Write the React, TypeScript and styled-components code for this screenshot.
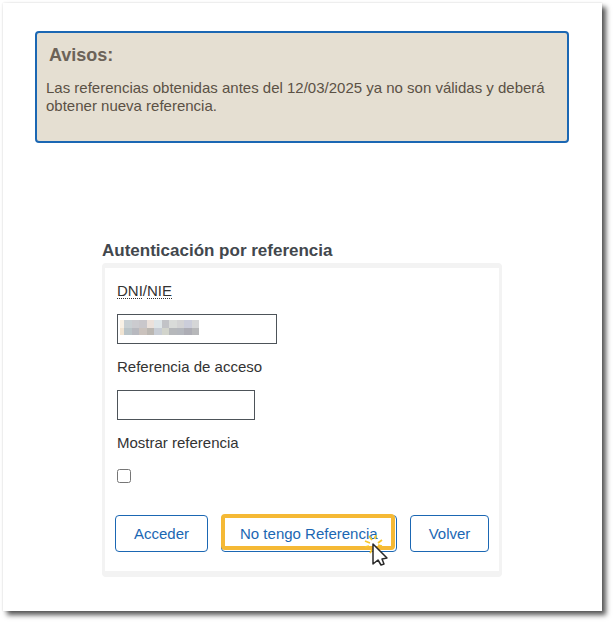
import React from "react";
import styled, { createGlobalStyle } from "styled-components";

const BLUE = "#1b67b3";

const GlobalStyle = createGlobalStyle`
  * { box-sizing: border-box; }
  body {
    margin: 0;
    background: #fff;
    color: #333;
    font-family: "Liberation Sans", Arial, sans-serif;
    font-size: 15px;
    line-height: 18px;
  }
`;

const Page = styled.main`
  min-height: calc(100vh - 14px);
  margin: 3px 11px 11px 3px;
  padding: 28px 33px 34px 32px;
  background: #fff;
  box-shadow: 0 0 2px rgba(0, 0, 0, 0.12), 4px 4px 5px rgba(0, 0, 0, 0.66);
`;

const Notice = styled.section`
  min-height: 112px;
  padding: 12px 9px;
  border: 2px solid ${BLUE};
  border-radius: 4px;
  background: #e5dfd2;
  color: #5b5145;
`;

const NoticeTitle = styled.h2`
  margin: 0 3px 14px;
  font-size: 18px;
  line-height: 20px;
  color: #6c6358;
`;

const NoticeText = styled.p`
  margin: 0;
`;

const Access = styled.section`
  margin: 97px 67px 0;
`;

const AccessTitle = styled.h1`
  margin: 0;
  font-size: 17px;
  line-height: 22px;
  color: #42474d;
`;

const Form = styled.form`
  margin-top: 1px;
  padding: 14px 10px 19px;
  border: solid #f3f3f3;
  border-width: 5px 3px 6px;
  border-radius: 4px;
`;

const Field = styled.div`
  display: flex;
  flex-direction: column;
  align-items: flex-start;
  gap: 14px;
  margin: 0 2px 14px;
`;

const Abbr = styled.abbr`
  text-decoration: underline dotted 1px;
  text-decoration-skip-ink: none;
  text-underline-offset: 2px;
`;

const InputFrame = styled.div`
  position: relative;
  display: flex;
`;

const TextInput = styled.input<{ $width: number }>`
  width: ${(p) => p.$width}px;
  height: 30px;
  padding: 4px;
  border: 1px solid #4d5359;
  border-radius: 0;
  background: #fff;
  font: inherit;
`;

const Mosaic = styled.svg`
  position: absolute;
  top: 6px;
  left: 3px;
  width: 79px;
  height: 15px;
  pointer-events: none;
`;

const Checkbox = styled.input`
  width: 14px;
  height: 14px;
  margin: 3px 0 0;
`;

const Actions = styled.div`
  display: flex;
  gap: 13px;
  margin-top: 32px;
`;

const Button = styled.button`
  position: relative;
  height: 37px;
  padding: 0 18px;
  border: 1px solid ${BLUE};
  border-radius: 4px;
  background: #fff;
  color: ${BLUE};
  font: inherit;
  white-space: nowrap;
  cursor: pointer;
`;

const Highlight = styled.span`
  position: absolute;
  inset: -2px 1px 1px -1px;
  border: 4px solid #f5b935;
  border-radius: 4px;
`;

const Pointer = styled.svg`
  position: absolute;
  right: 8px;
  bottom: -16px;
  width: 24px;
  height: 32px;
  pointer-events: none;
`;

const mosaicRows = [
  ["#f9f1e5", "#c9d0d3", "#cbcbcf", "#c9c7cb", "#ebe1db", "#dee5e8", "#c2c3c7", "#d9dbd9", "#d3d3d4", "#cbcdda", "#d5d6d7"],
  ["#f1e4d2", "#bac4c8", "#b8b9bf", "#cac2bd", "#bbb7b2", "#c8cdd5", "#d2d4cc", "#b6b8bb", "#b4b7bd", "#adadb5", "#b7b8ba"],
];

const HiddenValue = () => (
  <Mosaic viewBox="0 0 158 30" preserveAspectRatio="none" shapeRendering="crispEdges" aria-hidden="true">
    {mosaicRows.map((row, y) =>
      row.map((fill, x) => (
        <rect key={`${x}-${y}`} x={x ? 8 + (x - 1) * 15 : 0} y={y * 15} width={x ? 15 : 8} height="15" fill={fill} />
      ))
    )}
  </Mosaic>
);

const ClickPointer = () => (
  <Pointer viewBox="0 0 24 32" aria-hidden="true">
    <path d="M1 6l5 2M5 1l3 4M12 0l-1 4M18 5l-4 3M1 12l4-1M6 18l2-3M14 10l4 1" fill="none" stroke="#f7c72c" strokeWidth="1.8" />
    <path d="M9 9v20l5-4 3 5 3-1-2-5 5-1z" fill="#fff" stroke="#292929" strokeWidth="1.5" strokeLinejoin="round" />
  </Pointer>
);

export default function App() {
  return (
    <>
      <GlobalStyle />
      <Page>
        <Notice>
          <NoticeTitle>Avisos:</NoticeTitle>
          <NoticeText>
            Las referencias obtenidas antes del 12/03/2025 ya no son válidas y deberá obtener nueva referencia.
          </NoticeText>
        </Notice>
        <Access>
          <AccessTitle>Autenticación por referencia</AccessTitle>
          <Form onSubmit={(e) => e.preventDefault()}>
            <Field>
              <label htmlFor="dni">
                <Abbr>DNI</Abbr>/<Abbr>NIE</Abbr>
              </label>
              <InputFrame>
                <TextInput id="dni" type="text" $width={160} />
                <HiddenValue />
              </InputFrame>
            </Field>
            <Field>
              <label htmlFor="reference">Referencia de acceso</label>
              <TextInput id="reference" type="password" $width={138} />
            </Field>
            <Field>
              <label htmlFor="show">Mostrar referencia</label>
              <Checkbox id="show" type="checkbox" />
            </Field>
            <Actions>
              <Button type="submit">Acceder</Button>
              <Button type="button">
                No tengo Referencia
                <Highlight />
                <ClickPointer />
              </Button>
              <Button type="button">Volver</Button>
            </Actions>
          </Form>
        </Access>
      </Page>
    </>
  );
}
